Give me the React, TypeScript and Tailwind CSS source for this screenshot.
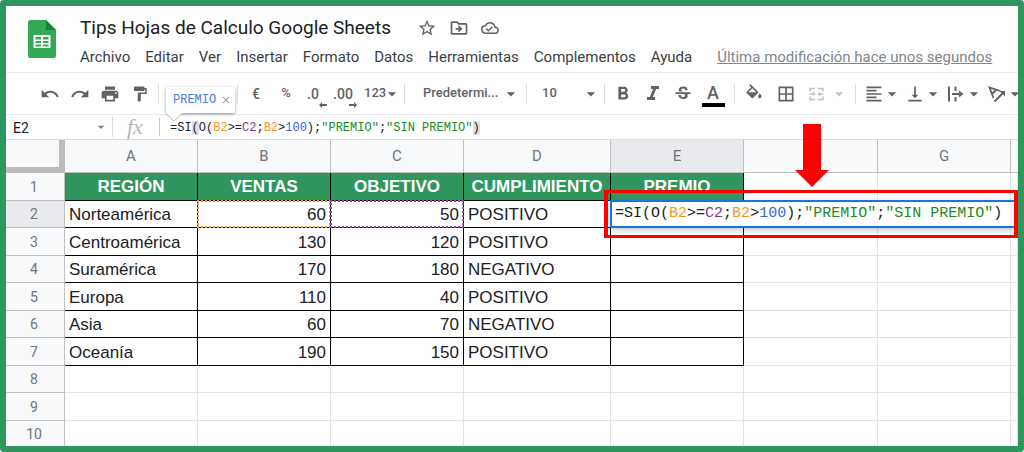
import type { ReactNode } from 'react';
import {
  MdArrowDropDown,
  MdBorderAll,
  MdClose,
  MdFormatAlignLeft,
  MdFormatBold,
  MdFormatItalic,
  MdFormatPaint,
  MdOutlineCloudDone,
  MdOutlineDriveFileMove,
  MdPrint,
  MdRedo,
  MdStarBorder,
  MdStrikethroughS,
  MdUndo,
  MdVerticalAlignBottom,
} from 'react-icons/md';

const menus = ['Archivo', 'Editar', 'Ver', 'Insertar', 'Formato', 'Datos', 'Herramientas', 'Complementos', 'Ayuda'];

const columns = [
  { name: 'A', width: 'w-[133px]' },
  { name: 'B', width: 'w-[133px]' },
  { name: 'C', width: 'w-[133px]' },
  { name: 'D', width: 'w-[147px]' },
  { name: 'E', width: 'w-[133px]' },
  { name: '', width: 'w-[134px]' },
  { name: 'G', width: 'w-[133px]' },
];

const titles = ['REGIÓN', 'VENTAS', 'OBJETIVO', 'CUMPLIMIENTO', 'PREMIO'];

const rows = [
  ['Norteamérica', '60', '50', 'POSITIVO'],
  ['Centroamérica', '130', '120', 'POSITIVO'],
  ['Suramérica', '170', '180', 'NEGATIVO'],
  ['Europa', '110', '40', 'POSITIVO'],
  ['Asia', '60', '70', 'NEGATIVO'],
  ['Oceanía', '190', '150', 'POSITIVO'],
];

function Formula({ highlight = false }: { highlight?: boolean }) {
  const paren = highlight ? 'bg-[#e0e0e0]' : '';
  return (
    <>
      =SI<span className={paren}>(</span>O(<span className="text-[#f7981d]">B2</span>&gt;=
      <span className="text-[#7e3794]">C2</span>;<span className="text-[#f7981d]">B2</span>&gt;
      <span className="text-[#3c64d8]">100</span>);<span className="text-[#1e8a1e]">"PREMIO"</span>;
      <span className="text-[#1e8a1e]">"SIN PREMIO"</span>
      <span className={paren}>)</span>
    </>
  );
}

function ToolButton({ label, children }: { label: string; children: ReactNode }) {
  return (
    <button aria-label={label} className="relative flex h-8 w-[30px] shrink-0 items-center justify-center">
      {children}
    </button>
  );
}

function MenuButton({ label, children }: { label: string; children: ReactNode }) {
  return (
    <button aria-label={label} className="flex h-8 w-[41px] shrink-0 items-center pl-0.5">
      {children}
      <MdArrowDropDown className="-ml-0.5 size-5 shrink-0" />
    </button>
  );
}

function Separator({ wide = false }: { wide?: boolean }) {
  return <div className={`h-5 w-px shrink-0 bg-[#dadce0] ${wide ? 'mx-1.5' : 'mx-[3px]'}`} />;
}

function SheetsLogo() {
  return (
    <svg viewBox="0 0 28 38" className="mt-3.5 h-[38px] w-7 shrink-0">
      <path d="M2.500 0H18l10 10v25.500a2.500 2.500 0 0 1-2.500 2.500h-23A2.500 2.500 0 0 1 0 35.500v-33A2.500 2.500 0 0 1 2.500 0z" fill="#34a853" />
      <path d="M18 0l10 10H18z" fill="#188038" />
      <path d="M5.500 15h17v13h-17z" fill="#fff" />
      <path d="M7.500 17h5.500v2.500H7.500zM15 17h5.500v2.500H15zM7.500 21h5.500v2H7.500zM15 21h5.500v2H15zM7.500 24.500h5.500v2H7.500zM15 24.500h5.500v2H15z" fill="#34a853" />
    </svg>
  );
}

function FillIcon() {
  return (
    <svg viewBox="0 0 24 24" className="-ml-1 size-5" fill="currentColor">
      <path d="M16.560 8.940L7.620 0 6.210 1.410l2.380 2.380-5.150 5.150c-.59.59-.59 1.540 0 2.120l5.500 5.500c.29.29.68.44 1.060.44s.77-.15 1.060-.44l5.500-5.500c.59-.58.59-1.530 0-2.120zM5.210 10L10 5.210 14.790 10H5.210zM19 11.500s-2 2.170-2 3.500c0 1.100.9 2 2 2s2-.9 2-2c0-1.330-2-3.500-2-3.500z" />
    </svg>
  );
}

function MergeIcon() {
  return (
    <svg viewBox="0 0 20 20" className="size-5" fill="none" stroke="currentColor" strokeWidth="2">
      <path d="M8.500 3.500h-6V7M11.500 3.500h6V7M8.500 16.500h-6V13M11.500 16.500h6V13" />
      <path d="M1.500 10H6M18.500 10H14" />
      <path d="M5.500 7l3.500 3-3.500 3zM14.500 7L11 10l3.500 3z" fill="currentColor" stroke="none" />
    </svg>
  );
}

function OverflowIcon() {
  return (
    <svg viewBox="0 0 20 20" className="size-5 shrink-0" fill="none" stroke="currentColor" strokeWidth="2">
      <path d="M3 2.500v15M9.500 2.500V7M9.500 13v4.500M6 10h8" />
      <path d="M13 6.500l4.500 3.500-4.500 3.500z" fill="currentColor" stroke="none" />
    </svg>
  );
}

function RotateIcon() {
  return (
    <svg viewBox="0 0 20 20" className="size-5 shrink-0" fill="none" stroke="currentColor">
      <path d="M6.500 14L2.500 3.500l11 3.500M5 10l4.500-4.500" strokeWidth="1.800" />
      <path d="M7.500 17.500L16 9" strokeWidth="2" />
      <path d="M12.500 7H18v5.500z" fill="currentColor" stroke="none" />
    </svg>
  );
}

function DecimalArrow({ left = false }: { left?: boolean }) {
  return (
    <svg
      viewBox="0 0 8 6"
      className={`absolute right-1 bottom-0.5 h-1.5 w-2 ${left ? '' : 'rotate-180'}`}
      fill="currentColor"
    >
      <path d="M0 3l3-3v2h5v2H3v2z" />
    </svg>
  );
}

function Header() {
  return (
    <header className="flex h-[67px] gap-6 border-b border-[#e8eaed] pl-[22px]">
      <SheetsLogo />
      <div className="min-w-0 flex-1">
        <div className="flex items-center pt-2.5">
          <h1 className="text-[19px] leading-6 whitespace-nowrap text-[#202124]">Tips Hojas de Calculo Google Sheets</h1>
          <div className="ml-[26px] flex gap-3 text-[#5f6368]">
            <button aria-label="Destacar"><MdStarBorder className="size-5" /></button>
            <button aria-label="Mover"><MdOutlineDriveFileMove className="size-5" /></button>
            <button aria-label="Estado del documento"><MdOutlineCloudDone className="size-[18px]" /></button>
          </div>
        </div>
        <nav className="mt-[7px] flex gap-[15px] text-[15px] leading-5 whitespace-nowrap text-[#3c4043]">
          {menus.map((menu) => (
            <button key={menu}>{menu}</button>
          ))}
          <a href="#historial" className="ml-2.5 text-[#80868b] underline">
            Última modificación hace unos segundos
          </a>
        </nav>
      </div>
    </header>
  );
}

function Toolbar() {
  return (
    <div className="relative flex h-[42px] items-center border-b border-[#e8eaed] pl-[29px] text-sm font-medium text-[#5f6368]">
      <ToolButton label="Deshacer"><MdUndo className="size-5" /></ToolButton>
      <ToolButton label="Rehacer"><MdRedo className="size-5" /></ToolButton>
      <ToolButton label="Imprimir"><MdPrint className="size-5" /></ToolButton>
      <ToolButton label="Copiar formato"><MdFormatPaint className="size-[18px]" /></ToolButton>
      <Separator />
      <div className="w-[72px] shrink-0" />
      <Separator />
      <ToolButton label="Formato de moneda">€</ToolButton>
      <ToolButton label="Formato de porcentaje"><span className="text-[13px]">%</span></ToolButton>
      <ToolButton label="Reducir decimales"><span className="pr-1.5">.0</span><DecimalArrow left /></ToolButton>
      <ToolButton label="Aumentar decimales"><span className="pr-1.5">.00</span><DecimalArrow /></ToolButton>
      <button className="flex w-10 shrink-0 items-center pl-[3px] text-[13px]">
        123
        <MdArrowDropDown className="-ml-1 size-5 shrink-0" />
      </button>
      <Separator />
      <div className="relative flex w-[115px] shrink-0 items-center">
        <select aria-label="Fuente" className="w-full appearance-none pl-[15px] text-[13px]">
          <option>Predetermi...</option>
        </select>
        <MdArrowDropDown className="pointer-events-none absolute right-0.5 size-5" />
      </div>
      <Separator />
      <div className="relative flex w-[71px] shrink-0 items-center">
        <select aria-label="Tamaño de fuente" className="w-full appearance-none pl-3 text-[13px]">
          <option>10</option>
        </select>
        <MdArrowDropDown className="pointer-events-none absolute right-0 size-5" />
      </div>
      <Separator />
      <ToolButton label="Negrita"><MdFormatBold className="size-[22px]" /></ToolButton>
      <ToolButton label="Cursiva"><MdFormatItalic className="size-6" /></ToolButton>
      <ToolButton label="Tachado"><MdStrikethroughS className="size-5" /></ToolButton>
      <button aria-label="Color de texto" className="flex w-[30px] shrink-0 flex-col items-center pt-0.5">
        <span className="text-lg leading-5">A</span>
        <span className="h-1 w-[23px] bg-black" />
      </button>
      <Separator wide />
      <ToolButton label="Color de relleno"><FillIcon /></ToolButton>
      <ToolButton label="Bordes"><MdBorderAll className="size-5" /></ToolButton>
      <button aria-label="Combinar celdas" className="flex w-12 shrink-0 items-center pl-[7px] text-[#c4c6c8]">
        <MergeIcon />
        <MdArrowDropDown className="ml-1 size-5 shrink-0" />
      </button>
      <Separator wide />
      <MenuButton label="Alineación horizontal"><MdFormatAlignLeft className="size-5 shrink-0" /></MenuButton>
      <MenuButton label="Alineación vertical"><MdVerticalAlignBottom className="size-5 shrink-0" /></MenuButton>
      <MenuButton label="Ajuste de texto"><OverflowIcon /></MenuButton>
      <MenuButton label="Rotación de texto"><RotateIcon /></MenuButton>

      {/* formula result preview */}
      <div className="absolute top-3.5 left-[160px] z-10 flex h-[26px] w-[69px] items-center gap-1 rounded-xs bg-white pl-[7px] font-['Liberation_Mono',monospace] text-xs font-normal text-[#4a7be0] shadow-[0_1px_3px_rgba(0,0,0,0.45)]">
        PREMIO
        <button aria-label="Cerrar" className="text-[#9aa0a6]"><MdClose className="size-3" /></button>
        <svg viewBox="0 0 16 9" className="absolute top-full left-0 h-[9px] w-4">
          <path d="M0 0h16L8 8z" fill="#fff" />
          <path d="M0 1l8 7 8-7" fill="none" stroke="#bbb" />
        </svg>
      </div>
    </div>
  );
}

function FormulaBar() {
  return (
    <div className="flex h-[25px] items-center border-b border-[#dadce0] text-[#202124]">
      <input aria-label="Cuadro de nombres" defaultValue="E2" className="w-[87px] pt-0.5 pl-[7px] text-sm" />
      <MdArrowDropDown className="size-4 text-[#80868b]" />
      <div className="ml-[3px] h-5 w-px bg-[#dadce0]" />
      <span className="w-[46px] pl-3.5 font-['Liberation_Serif',serif] text-[22px] leading-5 text-[#b5b7ba] italic">fx</span>
      <div className="h-[18px] w-px bg-[#c4c6c8]" />
      <div
        role="textbox"
        aria-label="Barra de fórmulas"
        className="ml-2.5 pt-0.5 font-['Liberation_Mono',monospace] text-xs leading-4 whitespace-nowrap"
      >
        <Formula highlight />
      </div>
    </div>
  );
}

function RowHeader({ row }: { row: number }) {
  return (
    <th
      className={`border-r border-b border-[#c0c0c0] p-0 pr-0.5 text-sm leading-5 font-normal text-[#70757a] ${
        row === 2 ? 'bg-[#e8eaed]' : 'bg-[#f8f9fa]'
      }`}
    >
      {row}
    </th>
  );
}

function EmptyCells({ count }: { count: number }) {
  return Array.from({ length: count }, (_, i) => <td key={i} className="border-r border-b border-[#e2e3e3] p-0" />);
}

function CellEditor() {
  return (
    <>
      <div className="absolute -top-px -left-px z-10 flex h-7 w-[406px] items-center border-2 border-[#1a73e8] bg-white pl-[3px] font-['Liberation_Mono',monospace] text-[15px] leading-5 whitespace-nowrap shadow-[0_2px_6px_rgba(60,64,67,0.3)]">
        <Formula />
      </div>
      <div className="absolute -top-[11px] -left-[7px] z-20 h-12 w-[414px] border-x-4 border-y-[3px] border-[#fe0000]" />
    </>
  );
}

function Sheet() {
  return (
    <table className="w-full table-fixed border-separate border-spacing-0 font-['Liberation_Sans',sans-serif] text-[17px] leading-5 text-[#202124]">
      <colgroup>
        <col className="w-[59px]" />
        {columns.map((column, i) => (
          <col key={i} className={column.width} />
        ))}
        <col />
      </colgroup>
      <thead className="font-[Roboto,sans-serif]">
        <tr className="h-[33px]">
          <td className="border-r-[6px] border-b-[6px] border-[#bdbdbd] bg-[#f8f9fa] p-0" />
          {columns.map((column, i) => (
            <th
              key={i}
              className={`relative border-r border-b border-[#c0c0c0] p-0 text-[15px] font-normal text-[#70757a] ${
                column.name === 'E' ? 'bg-[#e8eaed]' : 'bg-[#f8f9fa]'
              }`}
            >
              {column.name || (
                <svg viewBox="0 0 34 64" className="absolute -top-4 left-[51px] z-30 h-16 w-[34px]" fill="#fe0000">
                  <path d="M8 0h18v46h8L17 63 0 46h8z" />
                </svg>
              )}
            </th>
          ))}
          <td className="border-b border-[#c0c0c0] bg-[#f8f9fa] p-0" />
        </tr>
      </thead>
      <tbody className="[&_th]:font-[Roboto,sans-serif] [&>tr:nth-child(even)]:h-[27px] [&>tr:nth-child(odd)]:h-[28px]">
        <tr>
          <RowHeader row={1} />
          {titles.map((title) => (
            <td key={title} className="border-r border-b border-black bg-[#2f975d] p-0 text-center font-bold text-white">
              {title}
            </td>
          ))}
          <EmptyCells count={3} />
        </tr>
        {rows.map((cells, r) => (
          <tr key={cells[0]}>
            <RowHeader row={r + 2} />
            {cells.map((cell, c) => (
              <td
                key={c}
                className={`relative border-r border-b border-black px-1 pt-0.5 pb-0 ${c === 1 || c === 2 ? 'text-right' : ''}`}
              >
                {r === 0 && c === 1 && (
                  <span className="absolute -inset-px border-2 border-dotted border-[#f7981d]" />
                )}
                {r === 0 && c === 2 && (
                  <span className="absolute -inset-px border-2 border-dotted border-[#8e44a8]" />
                )}
                <span className="relative">{cell}</span>
              </td>
            ))}
            <td className="relative border-r border-b border-black p-0">{r === 0 && <CellEditor />}</td>
            <EmptyCells count={3} />
          </tr>
        ))}
        {[8, 9, 10].map((row) => (
          <tr key={row}>
            <RowHeader row={row} />
            <EmptyCells count={8} />
          </tr>
        ))}
      </tbody>
    </table>
  );
}

export default function App() {
  return (
    <div className="h-screen bg-white">
      <div className="h-full overflow-hidden rounded-sm border-6 border-[#2f975d] bg-white font-[Roboto,sans-serif]">
        <Header />
        <Toolbar />
        <FormulaBar />
        <Sheet />
      </div>
    </div>
  );
}
